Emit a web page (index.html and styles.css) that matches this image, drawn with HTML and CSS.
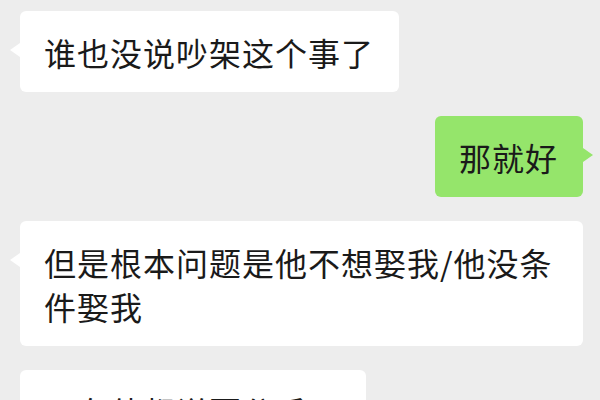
FILE: index.html
```html
<!DOCTYPE html>
<html lang="zh-CN">
<head>
    <meta charset="UTF-8">
    <meta name="viewport" content="width=device-width, initial-scale=1.0">
    <title>聊天</title>
    <link rel="stylesheet" href="styles.css">
</head>
<body>
    <div class="chat">
        <div class="bubble received">谁也没说吵架这个事了</div>
        <div class="bubble sent">那就好</div>
        <div class="bubble received">但是根本问题是他不想娶我/他没条件娶我</div>
        <div class="bubble received">现在他都说要分手了</div>
    </div>
</body>
</html>
```

FILE: styles.css
```css
html, body {
    margin: 0;
    height: 100%;
    overflow: hidden;
}

body {
    background-color: #ededed;
    font-family: "Noto Sans CJK SC", "Noto Sans", sans-serif;
    color: #1a1a1a;
}

.chat {
    display: flex;
    flex-direction: column;
    gap: 24px;
    padding: 11px 17px 0 20px;
}

.bubble {
    position: relative;
    max-width: 100%;
    box-sizing: border-box;
    padding: 18.5px 25px 18.5px 24px;
    font-size: 32px;
    letter-spacing: 1px;
    line-height: 44px;
    border-radius: 6px;
}

.bubble::before {
    content: "";
    position: absolute;
    top: 32px;
    border-top: 7px solid transparent;
    border-bottom: 7px solid transparent;
}

.received {
    align-self: flex-start;
    background-color: #fff;
}

.received::before {
    left: -10px;
    border-right: 10px solid #fff;
}

.sent {
    align-self: flex-end;
    background-color: #95e56b;
}

.sent::before {
    right: -10px;
    border-left: 10px solid #95e56b;
}
```
